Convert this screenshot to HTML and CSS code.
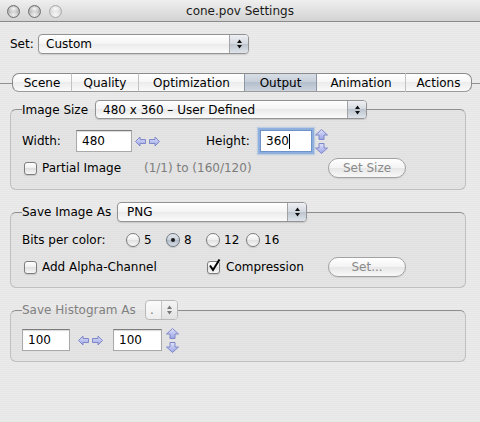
FILE: index.html
```html
<!DOCTYPE html>
<html>
<head>
<meta charset="utf-8">
<title>cone.pov Settings</title>
<link rel="stylesheet" href="styles.css">
</head>
<body>
<div class="titlebar">
  <div class="lights">
    <span class="light"></span>
    <span class="light"></span>
    <span class="light light-off"></span>
  </div>
  <div class="title">cone.pov Settings</div>
  <div></div>
</div>

<div class="setrow">
  <span class="setlabel">Set:</span>
  <div class="popup popup-set">
    <span class="popup-text">Custom</span>
    <span class="popup-arrows"><svg width="7" height="12" viewBox="0 0 7 12"><path d="M3.5 1.5 L6 5 H1 Z M3.5 10.5 L6 7 H1 Z" fill="#111"/></svg></span>
  </div>
</div>

<div class="tabhead">
  <div class="tab tab-scene">Scene</div>
  <div class="tab tab-quality">Quality</div>
  <div class="tab tab-opt">Optimization</div>
  <div class="tab tab-output tab-selected">Output</div>
  <div class="tab tab-anim">Animation</div>
  <div class="tab tab-actions">Actions</div>
</div>

<fieldset class="group group-size">
  <legend><div class="legend-inner">
    <span class="legend-label lbl-size">Image Size</span>
    <div class="popup popup-size">
      <span class="popup-text">480 x 360 – User Defined</span>
      <span class="popup-arrows"><svg width="7" height="12" viewBox="0 0 7 12"><path d="M3.5 1.5 L6 5 H1 Z M3.5 10.5 L6 7 H1 Z" fill="#111"/></svg></span>
    </div>
  </div></legend>
  <div class="row row-dims">
    <span class="fieldlabel">Width:</span>
    <div class="textfield tf-width">480</div>
    <svg class="hstep" width="25" height="11" viewBox="0 0 25 11">
      <defs><linearGradient id="ga" x1="0" y1="0" x2="0" y2="1"><stop offset="0" stop-color="#dfe2fb"/><stop offset="1" stop-color="#9aa3e4"/></linearGradient></defs>
      <path d="M0.5 5.5 L5 1 V3.5 H10.5 V7.5 H5 V10 Z" fill="url(#ga)" stroke="#7f88c8"/>
      <path d="M24.5 5.5 L20 1 V3.5 H14.5 V7.5 H20 V10 Z" fill="url(#ga)" stroke="#7f88c8"/>
    </svg>
    <span class="fieldlabel fl-height">Height:</span>
    <div class="textfield tf-height tf-focus">360<span class="caret"></span></div>
    <svg class="vstep" width="13" height="25" viewBox="0 0 13 25">
      <defs><linearGradient id="gb" x1="0" y1="0" x2="0" y2="1"><stop offset="0" stop-color="#dfe2fb"/><stop offset="1" stop-color="#9aa3e4"/></linearGradient></defs>
      <path d="M6.5 0.5 L12.5 6 H9 V10.5 H4 V6 H0.5 Z" fill="url(#gb)" stroke="#7f88c8"/>
      <path d="M6.5 24.5 L12.5 19 H9 V14.5 H4 V19 H0.5 Z" fill="url(#gb)" stroke="#7f88c8"/>
    </svg>
  </div>
  <div class="row row-partial">
    <label class="check check-partial"><span class="box"></span>Partial Image</label>
    <span class="graytext">(1/1) to (160/120)</span>
    <span class="button">Set Size</span>
  </div>
</fieldset>

<fieldset class="group group-save">
  <legend><div class="legend-inner">
    <span class="legend-label lbl-save">Save Image As</span>
    <div class="popup popup-save">
      <span class="popup-text">PNG</span>
      <span class="popup-arrows"><svg width="7" height="12" viewBox="0 0 7 12"><path d="M3.5 1.5 L6 5 H1 Z M3.5 10.5 L6 7 H1 Z" fill="#111"/></svg></span>
    </div>
  </div></legend>
  <div class="row row-bits">
    <span class="fieldlabel fl-bits">Bits per color:</span>
    <label class="radio"><span class="dot"></span>5</label>
    <label class="radio"><span class="dot dot-on"></span>8</label>
    <label class="radio"><span class="dot"></span>12</label>
    <label class="radio"><span class="dot"></span>16</label>
  </div>
  <div class="row row-alpha">
    <label class="check check-alpha"><span class="box"></span>Add Alpha-Channel</label>
    <label class="check"><span class="box box-on"><svg width="14" height="14" viewBox="0 0 14 14"><path d="M3 6.5 L6 11 L12.5 0.5" fill="none" stroke="#000" stroke-width="2"/></svg></span>Compression</label>
    <span class="button">Set...</span>
  </div>
</fieldset>

<fieldset class="group group-hist">
  <legend><div class="legend-inner">
    <span class="legend-label lbl-hist">Save Histogram As</span>
    <div class="popup popup-hist popup-disabled">
      <span class="popup-text">.</span>
      <span class="popup-arrows"><svg width="7" height="12" viewBox="0 0 7 12"><path d="M3.5 1.5 L6 5 H1 Z M3.5 10.5 L6 7 H1 Z" fill="#777"/></svg></span>
    </div>
  </div></legend>
  <div class="row row-hist">
    <div class="textfield tf-h1">100</div>
    <svg class="hstep hstep-hist" width="25" height="11" viewBox="0 0 25 11">
      <defs><linearGradient id="gc" x1="0" y1="0" x2="0" y2="1"><stop offset="0" stop-color="#dfe2fb"/><stop offset="1" stop-color="#9aa3e4"/></linearGradient></defs>
      <path d="M0.5 5.5 L5 1 V3.5 H10.5 V7.5 H5 V10 Z" fill="url(#gc)" stroke="#7f88c8"/>
      <path d="M24.5 5.5 L20 1 V3.5 H14.5 V7.5 H20 V10 Z" fill="url(#gc)" stroke="#7f88c8"/>
    </svg>
    <div class="textfield tf-h2">100</div>
    <svg class="vstep vstep-hist" width="13" height="25" viewBox="0 0 13 25">
      <defs><linearGradient id="gd" x1="0" y1="0" x2="0" y2="1"><stop offset="0" stop-color="#dfe2fb"/><stop offset="1" stop-color="#9aa3e4"/></linearGradient></defs>
      <path d="M6.5 0.5 L12.5 6 H9 V10.5 H4 V6 H0.5 Z" fill="url(#gd)" stroke="#7f88c8"/>
      <path d="M6.5 24.5 L12.5 19 H9 V14.5 H4 V19 H0.5 Z" fill="url(#gd)" stroke="#7f88c8"/>
    </svg>
  </div>
</fieldset>
</body>
</html>
```
FILE: styles.css
```css
html, body {
  margin: 0;
  padding: 0;
}
body {
  width: 480px;
  height: 422px;
  overflow: hidden;
  font-family: "DejaVu Sans", "Liberation Sans", sans-serif;
  font-size: 12px;
  color: #000;
  background-color: #e8e8e8;
  background-image: repeating-linear-gradient(to bottom, #ebebeb 0, #ebebeb 1px, #e6e6e6 1px, #e6e6e6 2px);
}

/* title bar */
.titlebar {
  height: 21px;
  border-bottom: 1px solid #8a8a8a;
  background: linear-gradient(to bottom, #efefef, #d3d3d3);
  display: grid;
  grid-template-columns: 1fr auto 1fr;
  align-items: center;
}
.lights {
  display: flex;
  gap: 8px;
  padding-left: 7px;
  padding-top: 1px;
}
.light {
  width: 11px;
  height: 11px;
  border-radius: 50%;
  border: 1px solid #6f6f6f;
  background:
    radial-gradient(ellipse 60% 35% at 50% 22%, rgba(255,255,255,0.9), rgba(255,255,255,0) 100%),
    radial-gradient(circle at 50% 80%, #f0f0f0 0, #b9b9b9 55%, #808080 100%);
}
.light-off {
  border-color: #aaaaaa;
  background:
    radial-gradient(ellipse 60% 35% at 50% 22%, rgba(255,255,255,0.9), rgba(255,255,255,0) 100%),
    radial-gradient(circle at 50% 80%, #f7f7f7 0, #dadada 55%, #bdbdbd 100%);
}
.title {
  color: #1a1a1a;
  padding-top: 1px;
}

/* Set row */
.setrow {
  display: flex;
  align-items: center;
  padding: 12px 0 0 10px;
}
.setlabel {
  width: 28px;
}

/* popups */
.popup {
  box-sizing: border-box;
  height: 20px;
  display: flex;
  align-items: stretch;
  border: 1px solid #939393;
  border-radius: 4px;
  background: linear-gradient(to bottom, #ffffff 0, #f4f4f4 50%, #eaeaea 50%, #fbfbfb 100%);
  box-shadow: 0 1px 1px rgba(0,0,0,0.12);
  overflow: hidden;
}
.popup-text {
  flex: 1;
  display: flex;
  align-items: center;
  padding-left: 7px;
  white-space: nowrap;
}
.popup-arrows {
  width: 18px;
  display: flex;
  align-items: center;
  justify-content: center;
  border-left: 1px solid #a3a3a3;
  background: linear-gradient(to bottom, #eef0f3 0, #d3d9e0 50%, #bcc4ce 50%, #dfe4ea 100%);
}
.popup-set { width: 211px; }
.popup-size { width: 272px; height: 19px; }
.popup-save { width: 190px; }
.popup-save .popup-text { padding-left: 9px; }
.popup-hist { width: 33px; }
.popup-hist .popup-text { padding-left: 4px; }
.popup-hist .popup-arrows { width: 15px; }
.popup-disabled {
  border-color: #b9b9b9;
  color: #777;
  box-shadow: none;
  background: linear-gradient(to bottom, #fbfbfb, #eeeeee);
}
.popup-disabled .popup-arrows {
  border-left-color: #c4c4c4;
  background: linear-gradient(to bottom, #f4f4f4, #e2e2e2);
}

/* tabs */
.tabhead {
  margin-top: 19px;
  padding-left: 12px;
  display: flex;
  background: linear-gradient(to bottom, transparent 10px, #8e8e8e 10px, #8e8e8e 11px, transparent 11px);
}
.tab {
  box-sizing: border-box;
  height: 19px;
  display: flex;
  align-items: center;
  justify-content: center;
  border-top: 1px solid #8a8a8a;
  border-bottom: 1px solid #9a9a9a;
  border-left: 1px solid #c2c2c2;
  background: linear-gradient(to bottom, #ffffff 0, #f6f6f6 50%, #ececec 50%, #fafafa 100%);
}
.tab-scene { width: 59px; border-left: 1px solid #8a8a8a; border-radius: 7px 0 0 7px; }
.tab-quality { width: 67px; }
.tab-opt { width: 106px; }
.tab-output { width: 73px; }
.tab-anim { width: 88px; }
.tab-actions { width: 67px; border-right: 1px solid #8a8a8a; border-radius: 0 7px 7px 0; }
.tab-selected {
  border-left-color: #8d97a4;
  border-right: 1px solid #8d97a4;
  background: linear-gradient(to bottom, #d8dee6 0, #c5cdd8 50%, #b4bfcc 50%, #ccd4de 100%);
}
.tab-selected + .tab { border-left: none; }

/* group boxes */
.group {
  box-sizing: border-box;
  width: 456px;
  margin: 12px 0 0 10px;
  padding: 8px 11px 10px 11px;
  border: 1px solid #bfbfbf;
  border-top-color: #8e8e8e;
  border-radius: 6px;
  background: rgba(0,0,0,0.022);
  min-width: 0;
}
.group legend {
  padding: 0;
}
.legend-inner {
  display: flex;
  align-items: center;
}
.lbl-size { width: 73px; }
.lbl-save { width: 95px; }
.lbl-hist { width: 123px; color: #808080; }

.group-size {
  margin-top: 8px;
  padding-top: 10px;
  padding-bottom: 11px;
}
.group-hist {
  padding-bottom: 9px;
}

.row {
  display: flex;
  align-items: center;
}
.row-dims { height: 24px; }
.row-partial { height: 20px; margin-top: 5px; }
.row-bits { height: 20px; }
.row-alpha { height: 20px; margin-top: 7px; }
.row-hist { height: 24px; }

.fieldlabel { width: 54px; }
.fl-height { margin-left: 46px; }
.fl-bits { width: 104px; }

/* text fields */
.textfield {
  box-sizing: border-box;
  height: 22px;
  display: flex;
  align-items: center;
  padding-left: 5px;
  background: #fff;
  border: 1px solid #a9a9a9;
  border-top-color: #7c7c7c;
  box-shadow: inset 0 1px 1px rgba(0,0,0,0.15);
}
.tf-width { width: 56px; }
.tf-height { width: 52px; }
.tf-focus {
  border-color: #6f93c8;
  box-shadow: 0 0 0 2px rgba(125,165,220,0.75), 0 0 1px 3px rgba(125,165,220,0.35);
}
.caret {
  display: inline-block;
  width: 1px;
  height: 15px;
  background: #000;
}
.tf-h1 { width: 48px; }
.tf-h2 { width: 49px; margin-left: 10px; }

.hstep { margin-left: 3px; }
.vstep { margin-left: 3px; }
.hstep-hist { margin-left: 8px; }
.vstep-hist { margin-left: 4px; }

/* checkboxes */
.check {
  display: flex;
  align-items: center;
}
.box {
  box-sizing: border-box;
  width: 13px;
  height: 13px;
  margin: 0 5px 0 2px;
  border: 1px solid #7d7d7d;
  border-radius: 3px;
  background: linear-gradient(to bottom, #ffffff 0, #eeeeee 50%, #e0e0e0 50%, #f7f7f7 100%);
  box-shadow: 0 1px 1px rgba(0,0,0,0.12);
  position: relative;
}
.box-on svg {
  position: absolute;
  left: -1px;
  top: -3px;
}
.check-partial { width: 122px; }
.check-alpha { width: 183px; }
.check-alpha + .check .box { margin-left: 2px; margin-right: 6px; }
.graytext { color: #7c7c7c; }

/* radios */
.radio {
  width: 40px;
  display: flex;
  align-items: center;
}
.dot {
  box-sizing: border-box;
  width: 14px;
  height: 14px;
  margin-right: 4px;
  border: 1px solid #7d7d7d;
  border-radius: 50%;
  background: linear-gradient(to bottom, #ffffff 0, #eeeeee 50%, #e0e0e0 50%, #f7f7f7 100%);
  box-shadow: 0 1px 1px rgba(0,0,0,0.12);
  display: flex;
  align-items: center;
  justify-content: center;
}
.dot-on {
  background: linear-gradient(to bottom, #e4e8ee 0, #c8d0da 50%, #b1bbc8 50%, #d5dce5 100%);
  border-color: #6f7782;
}
.dot-on::after {
  content: "";
  width: 4px;
  height: 4px;
  border-radius: 50%;
  background: #1a1a1a;
}

/* buttons */
.button {
  box-sizing: border-box;
  width: 78px;
  height: 20px;
  margin-left: auto;
  margin-right: 48px;
  display: flex;
  align-items: center;
  justify-content: center;
  border: 1px solid #a2a2a2;
  border-radius: 10px;
  color: #8a8a8a;
  background: linear-gradient(to bottom, #ffffff 0, #f3f3f3 50%, #e6e6e6 50%, #f8f8f8 100%);
  box-shadow: 0 1px 1px rgba(0,0,0,0.08);
}
```
